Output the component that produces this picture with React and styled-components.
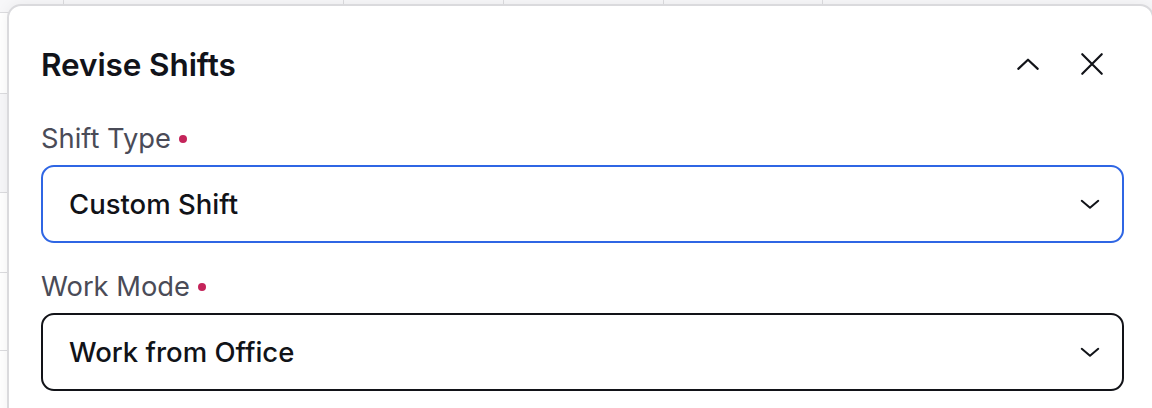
import React from "react";
import styled, { createGlobalStyle } from "styled-components";

const GlobalStyle = createGlobalStyle`
  html, body {
    margin: 0;
    padding: 0;
    background: #ffffff;
  }
  body {
    font-family: Inter, "Noto Sans", sans-serif;
    -webkit-font-smoothing: antialiased;
  }
`;

const Page = styled.div`
  position: relative;
  width: 1152px;
  height: 408px;
  overflow: hidden;
  background: #ffffff;
`;

// table behind the drawer
const Backdrop = styled.div`
  display: flex;
  flex-direction: column;
  height: 100%;
`;

const HeadRow = styled.div`
  display: grid;
  grid-template-columns: 64px 280px 160px 160px 159px 1fr;
  height: 12px;
  background: #f7f7f9;
  border-bottom: 1px solid #dcdcdf;
`;

const HeadCell = styled.div`
  border-right: ${(p) => (p.$last ? "none" : "1px solid #dcdcdf")};
`;

const BodyRow = styled.div`
  height: ${(p) => p.$h}px;
  background: ${(p) => (p.$shade ? "#f7f7f9" : "#ffffff")};
  border-bottom: 1px solid #dcdcdf;
`;

const Drawer = styled.section`
  position: absolute;
  top: 4px;
  left: 7px;
  width: 1147px;
  height: 420px;
  box-sizing: border-box;
  background: #ffffff;
  border: 2px solid #dadadd;
  border-radius: 14px;
  box-shadow: 0 0 14px rgba(0, 0, 0, 0.06);
  padding: 34px 28px 0 32px;
  display: flex;
  flex-direction: column;
`;

const Header = styled.div`
  display: flex;
  align-items: center;
  justify-content: space-between;
  height: 48px;
`;

const Title = styled.h2`
  margin: 0;
  font-size: 31.5px;
  font-weight: 600;
  color: #11131a;
  letter-spacing: -0.1px;
`;

const Actions = styled.div`
  display: flex;
  align-items: center;
  gap: 36px;
  padding-right: 18px;
`;

const IconButton = styled.button`
  display: flex;
  align-items: center;
  justify-content: center;
  width: 28px;
  height: 28px;
  padding: 0;
  border: none;
  background: transparent;
  color: #111318;
  cursor: pointer;
`;

const Field = styled.div`
  display: flex;
  flex-direction: column;
  margin-top: ${(p) => p.$top}px;
`;

const Label = styled.label`
  display: flex;
  align-items: center;
  gap: 8px;
  font-size: 27.3px;
  font-weight: 400;
  color: #4a4b57;
  line-height: 32px;
`;

const Required = styled.span`
  width: 8px;
  height: 8px;
  border-radius: 50%;
  background: #c4245a;
`;

const Select = styled.div`
  display: flex;
  align-items: center;
  justify-content: space-between;
  height: 78px;
  margin-top: 10px;
  box-sizing: border-box;
  padding: 0 21px 0 26px;
  border: 2px solid ${(p) => (p.$focused ? "#2f66e4" : "#121318")};
  border-radius: 13px;
  font-size: 27.5px;
  font-weight: 500;
  color: #111318;
`;

const Chevron = ({ up }) =>
  up ? (
    <svg width="26" height="26" viewBox="0 0 24 24" fill="none" stroke="currentColor"
      strokeWidth="2" strokeLinecap="round" strokeLinejoin="round">
      <path d="M3 16.5l9-8.5 9 8.5" />
    </svg>
  ) : (
    <svg width="22" height="22" viewBox="0 0 24 24" fill="none" stroke="currentColor"
      strokeWidth="2.2" strokeLinecap="round" strokeLinejoin="round">
      <path d="M3 8.5l9 7.5 9-7.5" />
    </svg>
  );

const Close = () => (
  <svg width="26" height="26" viewBox="0 0 24 24" fill="none" stroke="currentColor"
    strokeWidth="2" strokeLinecap="round">
    <path d="M3 3l18 18M21 3L3 21" />
  </svg>
);

const fields = [
  { label: "Shift Type", value: "Custom Shift", focused: true, top: 35 },
  { label: "Work Mode", value: "Work from Office", focused: false, top: 28 },
];

const App = () => {
  return (
    <Page>
      <GlobalStyle />
      <Backdrop>
        <HeadRow>
          <HeadCell />
          <HeadCell />
          <HeadCell />
          <HeadCell />
          <HeadCell />
          <HeadCell $last />
        </HeadRow>
        <BodyRow $h={80} />
        <BodyRow $h={98} $shade />
        <BodyRow $h={79} />
        <BodyRow $h={77} />
      </Backdrop>

      <Drawer>
        <Header>
          <Title>Revise Shifts</Title>
          <Actions>
            <IconButton aria-label="Collapse">
              <Chevron up />
            </IconButton>
            <IconButton aria-label="Close">
              <Close />
            </IconButton>
          </Actions>
        </Header>
        {fields.map((f) => (
          <Field key={f.label} $top={f.top}>
            <Label>
              {f.label}
              <Required />
            </Label>
            <Select $focused={f.focused}>
              {f.value}
              <Chevron />
            </Select>
          </Field>
        ))}
      </Drawer>
    </Page>
  );
};

export default App;
